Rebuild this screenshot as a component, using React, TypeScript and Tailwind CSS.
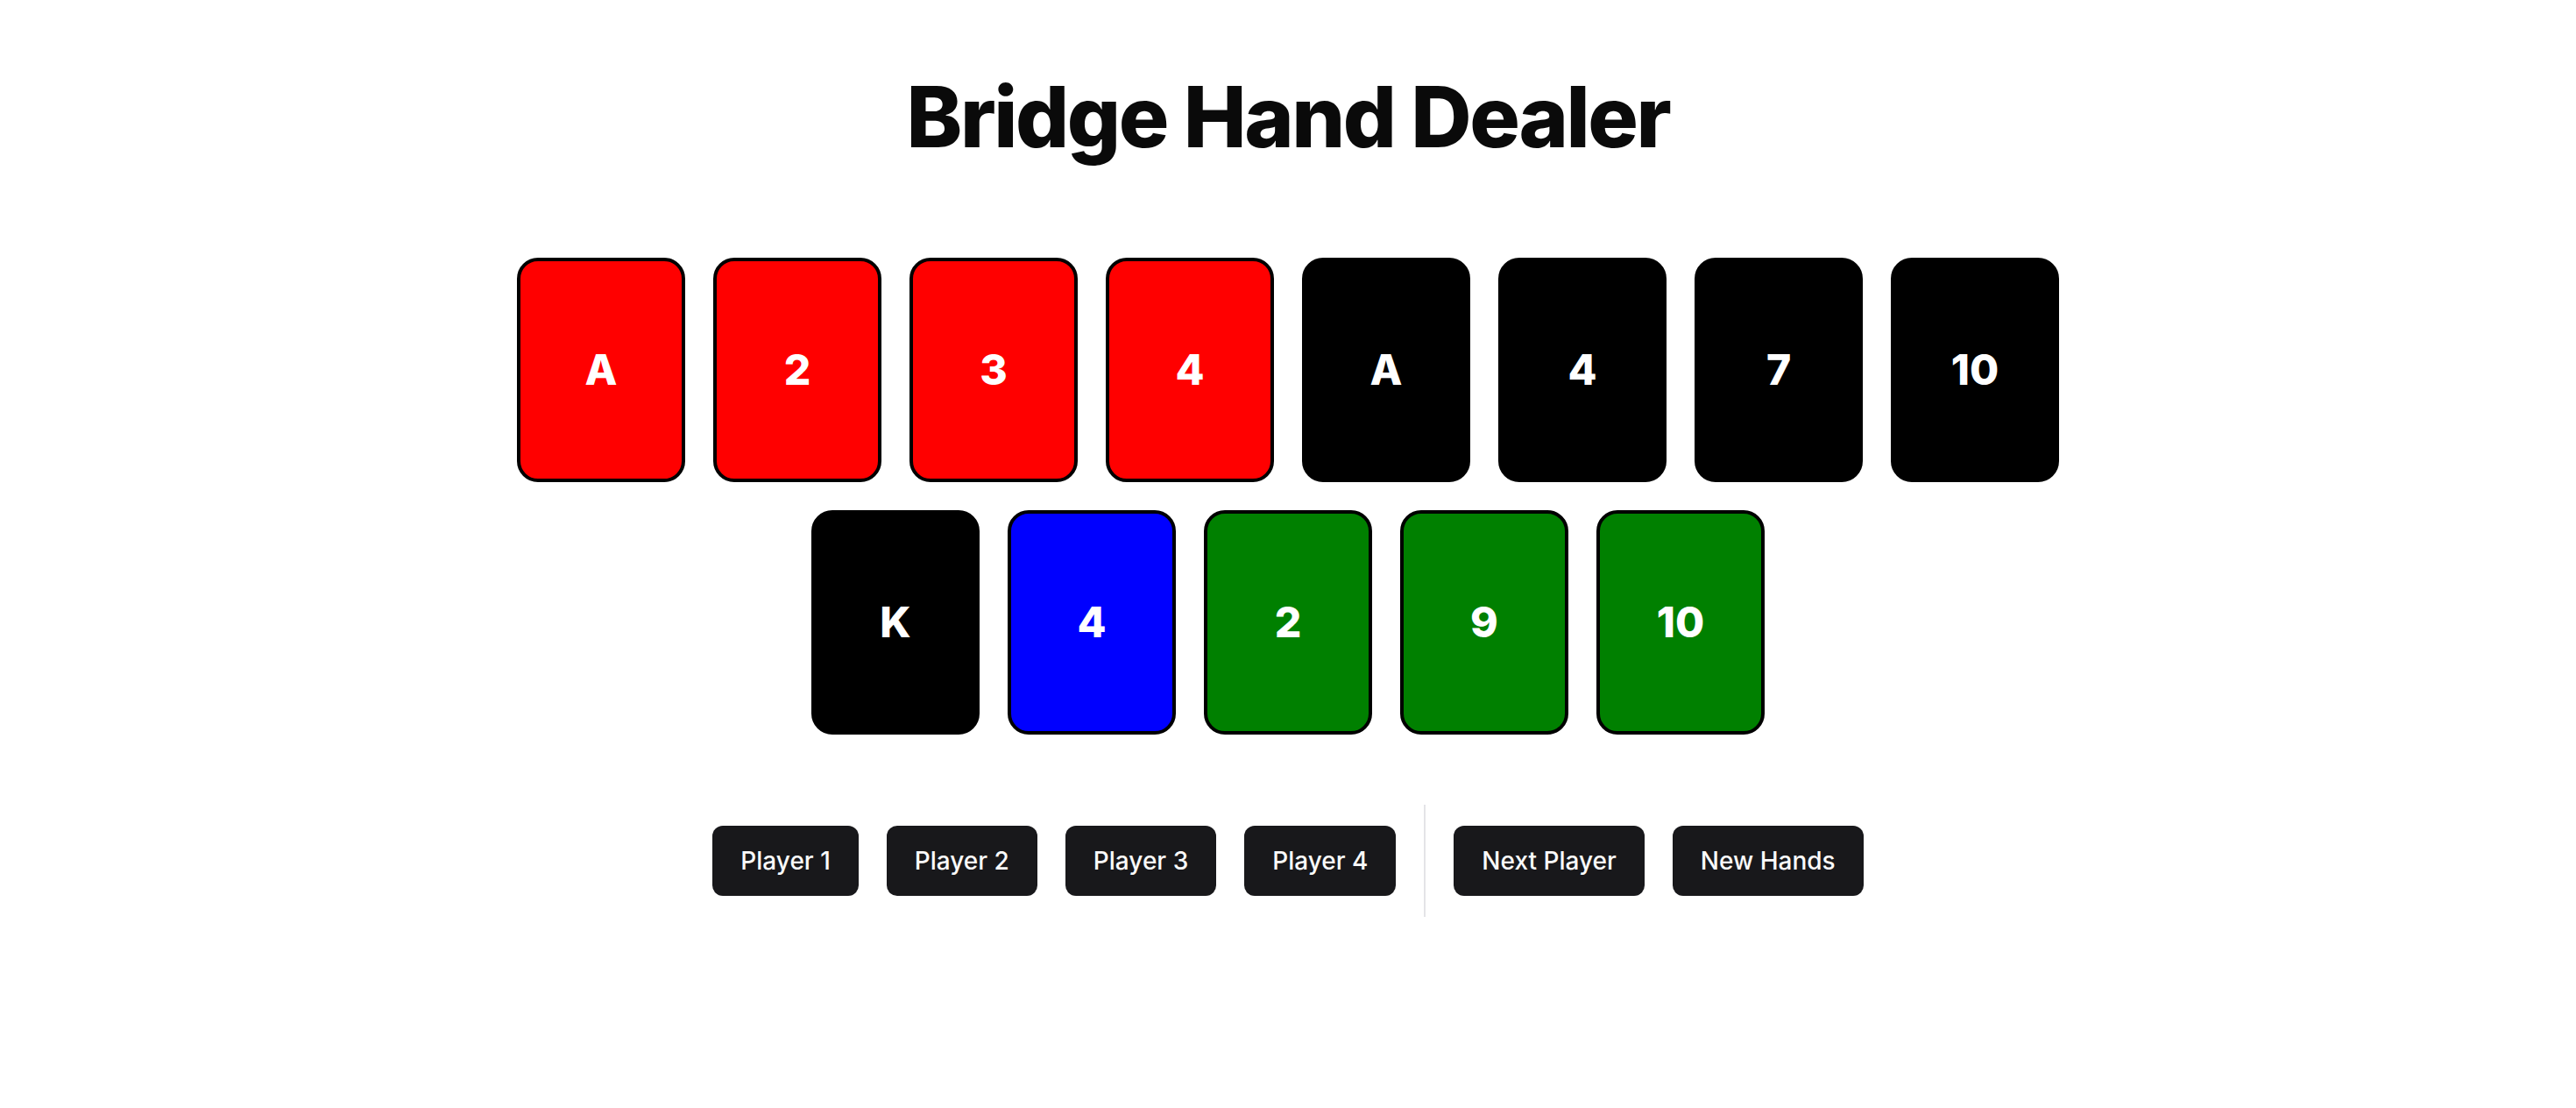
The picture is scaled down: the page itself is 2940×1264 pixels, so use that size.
import React, { useState } from "react";

type Card = { rank: string; color: string };

const hand: Card[] = [
  { rank: "A", color: "bg-[#ff0000] border-black" },
  { rank: "2", color: "bg-[#ff0000] border-black" },
  { rank: "3", color: "bg-[#ff0000] border-black" },
  { rank: "4", color: "bg-[#ff0000] border-black" },
  { rank: "A", color: "bg-black border-black" },
  { rank: "4", color: "bg-black border-black" },
  { rank: "7", color: "bg-black border-black" },
  { rank: "10", color: "bg-black border-black" },
  { rank: "K", color: "bg-black border-black" },
  { rank: "4", color: "bg-[#0000ff] border-black" },
  { rank: "2", color: "bg-[#008000] border-black" },
  { rank: "9", color: "bg-[#008000] border-black" },
  { rank: "10", color: "bg-[#008000] border-black" },
];

function PlayingCard({ card }: { card: Card }) {
  return (
    <div
      className={`flex h-[256px] w-[192px] items-center justify-center rounded-[24px] border-[4px] ${card.color}`}
    >
      <span className="text-[48px] font-extrabold leading-none text-white">{card.rank}</span>
    </div>
  );
}

function Button({ children, onClick }: { children: React.ReactNode; onClick?: () => void }) {
  return (
    <button
      onClick={onClick}
      className="flex h-[80px] items-center justify-center rounded-[12px] bg-[#18181b] px-[32px] text-[28px] font-medium text-[#fafafa]"
    >
      {children}
    </button>
  );
}

export default function App() {
  const [player, setPlayer] = useState(1);
  return (
    <div
      className="flex min-h-screen w-full flex-col items-center bg-white pt-[85px]"
      style={{ fontFamily: "Inter, 'Noto Sans', sans-serif" }}
      data-player={player}
    >
      <h1 className="text-[96px] font-extrabold leading-none tracking-tight text-[#0a0a0a]">
        Bridge Hand Dealer
      </h1>

      <div className="mt-[113px] flex w-[1800px] flex-wrap justify-center gap-x-[32px] gap-y-[32px]">
        {hand.map((c, i) => (
          <PlayingCard key={i} card={c} />
        ))}
      </div>

      <div className="mt-[80px] flex items-center gap-[32px]">
        {[1, 2, 3, 4].map((n) => (
          <Button key={n} onClick={() => setPlayer(n)}>
            Player {n}
          </Button>
        ))}
        <div className="h-[128px] w-[2px] bg-[#e4e4e7]" />
        <Button onClick={() => setPlayer((p) => (p % 4) + 1)}>Next Player</Button>
        <Button>New Hands</Button>
      </div>
    </div>
  );
}
